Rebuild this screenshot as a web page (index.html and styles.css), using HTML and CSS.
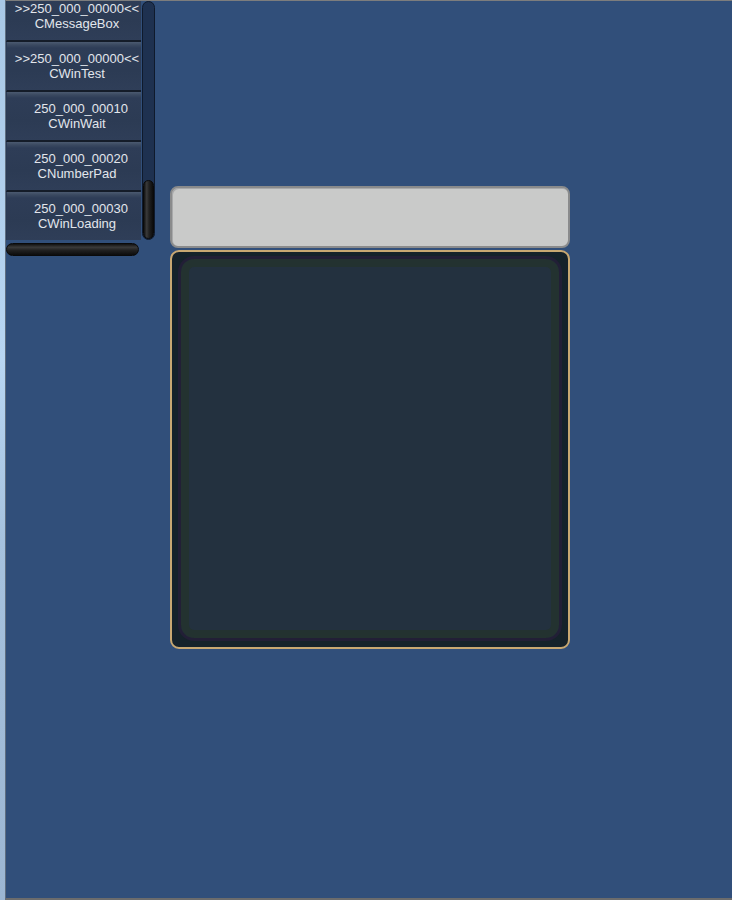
FILE: index.html
```html
<!DOCTYPE html>
<html>
<head>
<meta charset="utf-8">
<link rel="stylesheet" href="styles.css">
</head>
<body>
<div class="edge"></div>
<div class="frame">
  <div class="sidebar">
    <div class="listwrap">
      <div class="list">
        <div class="item first"><span>&gt;&gt;250_000_00000&lt;&lt;</span><span>CMessageBox</span></div>
        <div class="item"><span>&gt;&gt;250_000_00000&lt;&lt;</span><span>CWinTest</span></div>
        <div class="item"><span class="num">250_000_00010</span><span>CWinWait</span></div>
        <div class="item"><span class="num">250_000_00020</span><span>CNumberPad</span></div>
        <div class="item"><span class="num">250_000_00030</span><span>CWinLoading</span></div>
      </div>
      <div class="vscroll"><div class="vthumb"></div></div>
    </div>
    <div class="hscroll"></div>
  </div>
  <div class="main">
    <div class="inputbox"></div>
    <div class="panel"><div class="panel-inner"></div></div>
  </div>
</div>
</body>
</html>
```
FILE: styles.css
```css
html, body {
  margin: 0;
  padding: 0;
  height: 900px;
  overflow: hidden;
}
body {
  display: flex;
  font-family: "Liberation Sans", Arial, sans-serif;
  background: #b4d2ee;
}
.edge {
  width: 5px;
  height: 900px;
  background: linear-gradient(180deg, #a9c8e6 0%, #b8d6f2 40%, #a6c2de 60%, #9cb6d2 100%);
}
.frame {
  flex: 1;
  height: 897px;
  background: #314f7a;
  border-left: 1px solid #5f6e80;
  border-top: 1px solid #7d7d7d;
  border-bottom: 2px solid #6c6c6c;
  display: flex;
  box-sizing: content-box;
}
.sidebar {
  width: 150px;
  display: flex;
  flex-direction: column;
}
.listwrap {
  display: flex;
  height: 239px;
}
.list {
  width: 135px;
  height: 239px;
  overflow: hidden;
}
.item {
  height: 50px;
  box-sizing: border-box;
  display: flex;
  flex-direction: column;
  align-items: center;
  justify-content: center;
  color: #e2e6ec;
  font-size: 13px;
  line-height: 15px;
  background: linear-gradient(180deg, #4b5a70 0px, #3a4960 3px, #2e3d57 6px, #2c3b54 60%, #2f3e58 100%);
  border-bottom: 2px solid #141c28;
  padding-left: 6px;
  padding-bottom: 1px;
  border-left: 1px solid #2a3a55;
}
.item .num {
  padding-left: 8px;
}
.item.first {
  margin-top: -9px;
}
.vscroll {
  width: 13px;
  height: 239px;
  margin-left: 1px;
  box-sizing: border-box;
  background: #1e3150;
  border: 1px solid #0f1a2c;
  border-radius: 7px;
  display: flex;
  flex-direction: column;
  justify-content: flex-end;
}
.vthumb {
  height: 57px;
  border-radius: 6px;
  background: linear-gradient(90deg, #111 0%, #3a3a3a 30%, #222 55%, #0c0c0c 100%);
  border: 1px solid #0a0a0a;
}
.hscroll {
  width: 133px;
  height: 13px;
  margin-top: 3px;
  box-sizing: border-box;
  border-radius: 7px;
  border: 1px solid #0a0a0a;
  background: linear-gradient(180deg, #111 0%, #3a3a3a 30%, #222 55%, #0c0c0c 100%);
}
.main {
  margin-left: 14px;
  padding-top: 185px;
  display: flex;
  flex-direction: column;
  gap: 2px;
}
.inputbox {
  width: 400px;
  height: 62px;
  box-sizing: border-box;
  background: #c9cac9;
  border: 2px solid #8a8b8c;
  border-radius: 8px;
  box-shadow: inset 1px 1px 0 #a8a9aa;
}
.panel {
  width: 400px;
  height: 399px;
  box-sizing: border-box;
  border: 2px solid #c8a872;
  border-radius: 9px;
  background: #15222a;
  padding: 4px 6px 6px 6px;
}
.panel-inner {
  height: 100%;
  box-sizing: border-box;
  border-radius: 16px;
  background: #23313f;
  border: 3px solid #221f36;
  box-shadow: inset 0 0 0 8px #233230;
}
```
